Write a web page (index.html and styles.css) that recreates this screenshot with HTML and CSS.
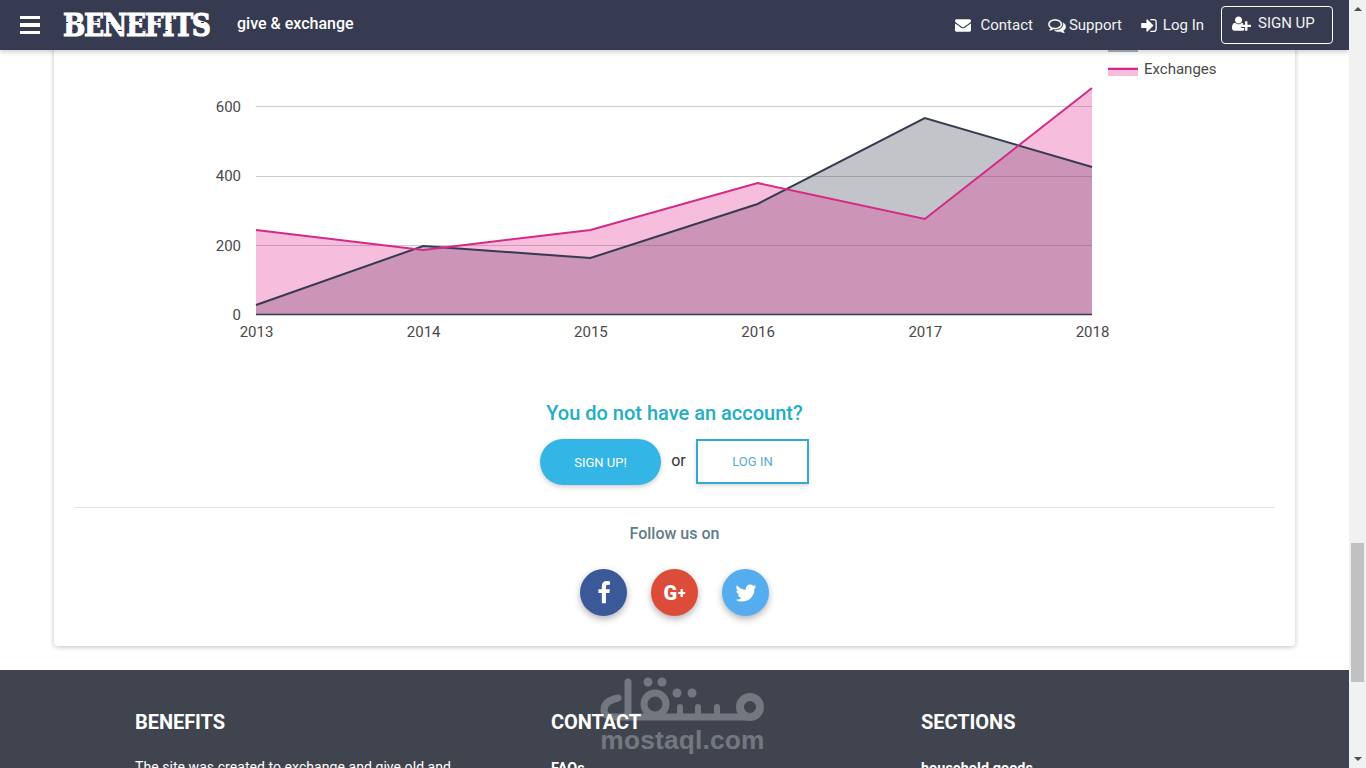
FILE: index.html
```html
<!DOCTYPE html>
<html lang="en">
<head>
<meta charset="utf-8">
<title>Benefits</title>
<link rel="stylesheet" href="styles.css">
</head>
<body>
<div class="window">
  <div class="page">
    <header class="navbar">
      <div class="nav-left">
        <div class="burger"><span></span><span></span><span></span></div>
        <div class="logo"><span class="logo-text">BENEFITS</span></div>
        <div class="tagline">give &amp; exchange</div>
      </div>
      <nav class="nav-right">
        <a class="nav-link link-contact">
          <svg class="ico ico-env" viewBox="0 256 1792 1408"><path fill="#fff" d="M1792 710v794q0 66-47 113t-113 47h-1472q-66 0-113-47t-47-113v-794q44 49 101 87 362 246 497 345 57 42 92.5 65.5t94.5 48 110 24.5h2q51 0 110-24.5t94.5-48 92.5-65.5q170-123 498-345 57-39 100-87zm0-294q0 79-49 151t-122 123q-376 261-468 325-10 7-42.5 30.5t-54 38-52 32.5-57.5 27-50 9h-2q-23 0-50-9t-57.5-27-52-32.5-54-38-42.5-30.5q-91-64-262-182.5t-205-142.5q-62-42-117-115.5t-55-136.5q0-78 41.5-130t118.5-52h1472q65 0 112.5 47t47.5 113z"/></svg>
          <span>Contact</span>
        </a>
        <a class="nav-link link-support">
          <svg class="ico ico-com" viewBox="0 128 1792 1536"><path fill="#fff" stroke="#fff" stroke-width="35" d="M704 384q-153 0-286 52t-211.5 141-78.5 191q0 82 53 158t149 132l97 56-35 84q34-20 62-39l44-31 53 10q78 14 153 14 153 0 286-52t211.5-141 78.5-191-78.5-191-211.5-141-286-52zm0-128q191 0 353.5 68.5t256.5 186.5 94 257-94 257-256.5 186.5-353.5 68.5q-86 0-176-16-124 88-278 128-36 9-86 16h-3q-11 0-20.5-8t-11.5-21q-1-3-1-6.5t.5-6.5 2-6l2.5-5 3.5-5.5 4-5 4.5-5 4-4.5q5-6 23-25t26-29.5 22.5-29 25-38.5 20.5-44q-124-72-195-177t-71-224q0-139 94-257t256.5-186.5 353.5-68.5zm822 1169q10 24 20.5 44t25 38.5 22.5 29 26 29.5 23 25q1 1 4 4.5t4.5 5 4 5 3.5 5.5l2.5 5 2 6 .5 6.5-1 6.5q-3 14-13 22t-22 7q-50-7-86-16-154-40-278-128-90 16-176 16-271 0-472-132 58 4 88 4 161 0 309-45t264-129q125-92 192-212t67-254q0-77-23-152 129 71 204 178t75 230q0 120-71 224.5t-195 176.5z"/></svg>
          <span>Support</span>
        </a>
        <a class="nav-link link-login">
          <svg class="ico ico-sign" viewBox="0 256 1536 1280"><path fill="#fff" d="M1184 896q0 26-19 45l-544 544q-19 19-45 19t-45-19-19-45v-288h-448q-26 0-45-19t-19-45v-384q0-26 19-45t45-19h448v-288q0-26 19-45t45-19 45 19l544 544q19 19 19 45zm352-352v704q0 119-84.5 203.5t-203.5 84.5h-320q-13 0-22.5-9.5t-9.5-22.5q0-4-1-20t-.5-26.5 3-23.5 10-19.5 20.5-6.5h320q66 0 113-47t47-113v-704q0-66-47-113t-113-47h-312l-11.5-1-11.5-3-8-5.5-7-9-2-13.5q0-4-1-20t-.5-26.5 3-23.5 10-19.5 20.5-6.5h320q119 0 203.5 84.5t84.5 203.5z"/></svg>
          <span>Log In</span>
        </a>
        <a class="nav-btn">
          <svg class="ico ico-user" viewBox="0 128 2048 1536"><path fill="#fff" d="M704 896q-159 0-271.5-112.5t-112.5-271.5 112.5-271.5 271.5-112.5 271.5 112.5 112.5 271.5-112.5 271.5-271.5 112.5zm960 128h352q13 0 22.5 9.5t9.5 22.5v192q0 13-9.5 22.5t-22.5 9.5h-352v352q0 13-9.5 22.5t-22.5 9.5h-192q-13 0-22.5-9.5t-9.5-22.5v-352h-352q-13 0-22.5-9.5t-9.5-22.5v-192q0-13 9.5-22.5t22.5-9.5h352v-352q0-13 9.5-22.5t22.5-9.5h192q13 0 22.5 9.5t9.5 22.5v352zm-736 224q0 52 38 90t90 38h256v238q-68 50-171 50h-874q-121 0-194-69t-73-190q0-53 3.5-103.5t14-109 26.5-108.5 43-97.5 62-81 85.5-53.5 111.5-20q19 0 39 17 79 61 154.5 91.5t164.5 30.5 164.5-30.5 154.5-91.5q20-17 39-17 78 0 133 29v359z"/></svg>
          <span>SIGN UP</span>
        </a>
      </nav>
    </header>

    <main class="card">
      <svg class="chart" viewBox="0 0 1241 370" role="img" aria-label="Line chart of exchanges per year">
        <g class="grid">
          <line x1="202" x2="1038" y1="106.5" y2="106.5"/>
          <line x1="202" x2="1038" y1="176.5" y2="176.5"/>
        </g>
        <polygon class="area-dark" points="202,305 369.2,246 536.4,258 703.6,204 870.8,118 1038,167 1038,315 202,315"/>
        <polygon class="area-pink" points="202,230 369.2,250 536.4,230 703.6,183 870.8,219 1038,88 1038,315 202,315"/>
        <line class="grid-over" x1="202" x2="1038" y1="245.5" y2="245.5"/>
        <polyline class="line-dark" points="202,305 369.2,246 536.4,258 703.6,204 870.8,118 1038,167"/>
        <polyline class="line-pink" points="202,230 369.2,250 536.4,230 703.6,183 870.8,219 1038,88"/>
        <line class="axis" x1="202" x2="1038" y1="314.500" y2="314.500"/>
        <g class="ylabels">
          <text x="187" y="111.500">600</text>
          <text x="187" y="181">400</text>
          <text x="187" y="250.500">200</text>
          <text x="187" y="320">0</text>
        </g>
        <g class="xlabels">
          <text x="202.500" y="337">2013</text>
          <text x="369.700" y="337">2014</text>
          <text x="536.900" y="337">2015</text>
          <text x="704.100" y="337">2016</text>
          <text x="871.300" y="337">2017</text>
          <text x="1038.500" y="337">2018</text>
        </g>
        <rect class="swatch-dark" x="1054" y="40" width="30" height="12"/>
        <rect class="swatch-pink" x="1054" y="67" width="30" height="9"/>
        <line class="line-pink" x1="1054" x2="1084" y1="69" y2="69"/>
        <text class="legend" x="1090" y="74">Exchanges</text>
      </svg>

      <h3 class="cta-title">You do not have an account?</h3>
      <div class="cta-row">
        <a class="btn-signup">SIGN UP!</a>
        <span class="cta-or">or</span>
        <a class="btn-login">LOG IN</a>
      </div>
      <hr class="divider">
      <div class="follow">Follow us on</div>
      <div class="socials">
        <a class="social fb"><svg viewBox="0 0 1792 1792"><path fill="#fff" d="M1343 12v264h-157q-86 0-116 36t-30 108v189h293l-39 296h-254v759h-306v-759h-255v-296h255v-218q0-186 104-288.500t277-102.500q147 0 228 12z"/></svg></a>
        <a class="social gp"><span class="gp-g">G</span><span class="gp-plus">+</span></a>
        <a class="social tw"><svg viewBox="0 0 1792 1792"><path fill="#fff" d="M1684 408q-67 98-162 167 1 14 1 42 0 130-38 259.500t-115.500 248.500-184.500 210.500-258 146-323 54.500q-271 0-496-145 35 4 78 4 225 0 401-138-105-2-188-64.500t-114-159.500q33 5 61 5 43 0 85-11-112-23-185.500-111.500t-73.500-205.500v-4q68 38 146 41-66-44-105-115t-39-154q0-88 44-163 121 149 294.500 238.500t371.500 99.500q-8-38-8-74 0-134 94.500-228.500t228.500-94.500q140 0 236 102 109-21 205-78-37 115-142 178 92-10 184-50z"/></svg></a>
      </div>
    </main>

    <footer class="footer">
      <section class="col col-a">
        <h4>BENEFITS</h4>
        <p>The site was created to exchange and give old and</p>
      </section>
      <section class="col col-b">
        <h4>CONTACT</h4>
        <p class="strong">FAQs</p>
      </section>
      <section class="col col-c">
        <h4>SECTIONS</h4>
        <p class="strong">household goods</p>
      </section>
      <div class="watermark">
        <svg class="wm-logo" viewBox="0 0 176 52">
          <g fill="none" stroke="#fff" stroke-linecap="round" stroke-linejoin="round">
            <path stroke-width="7" d="M32 6 V41"/>
            <path stroke-width="7" d="M22 22 C12 24 8 28 8 34 C8 38 11 41 16 41 H150"/>
            <circle stroke-width="7" cx="59" cy="28" r="11"/>
            <path stroke-width="6" d="M84 41 V31 M102 41 V31 M121 41 V31"/>
            <circle stroke-width="8" cx="154" cy="31" r="10"/>
          </g>
          <g fill="#fff">
            <circle cx="52" cy="6" r="4.500"/><circle cx="66" cy="6" r="4.500"/>
            <circle cx="81" cy="17" r="4.500"/><circle cx="96" cy="17" r="4.500"/>
          </g>
        </svg>
        <div class="wm-text">mostaql.com</div>
      </div>
    </footer>
  </div>
  <aside class="scrollbar">
    <span class="arrow up"></span>
    <div class="track"><div class="thumb"></div></div>
    <span class="arrow down"></span>
  </aside>
</div>
</body>
</html>
```

FILE: styles.css
```css
* { box-sizing: border-box; }
html, body { margin: 0; height: 100%; overflow: hidden; }
body { font-family: Roboto, "Liberation Sans", sans-serif; background: #fff; color: #444; }

.window { display: flex; width: 1366px; height: 768px; overflow: hidden; }
.page { position: relative; width: 1349px; height: 768px; overflow: hidden; background: #fff; }

.navbar {
  position: absolute; top: 0; left: 0; z-index: 5;
  width: 100%; height: 50px; padding: 0 16px 0 20px;
  display: flex; align-items: center; justify-content: space-between;
  background: #363b51; color: #fff;
  box-shadow: 0 2px 5px rgba(0,0,0,.2);
}
.nav-left { display: flex; align-items: center; }
.burger { width: 20px; display: flex; flex-direction: column; gap: 4px; margin-right: 23px; }
.burger span { display: block; height: 3.5px; background: #fff; }
.logo { position: relative; width: 174px; height: 30px; }
.logo-text {
  display: inline-block;
  font-family: "DejaVu Serif", "Liberation Serif", serif;
  font-weight: 700; font-size: 26.5px; line-height: 30px; letter-spacing: -1.3px;
  -webkit-text-stroke: .9px #fff;
  transform: scaleY(1.22); transform-origin: left center;
}
.logo::after {
  content: ""; position: absolute; left: 0; top: 12px; width: 150px; height: 9px;
  background:
    repeating-linear-gradient(90deg, #363b51 0 5px, transparent 5px 14px, #363b51 14px 17px, transparent 17px 31px) 0 0 / 100% 1px no-repeat,
    repeating-linear-gradient(90deg, transparent 0 9px, #363b51 9px 13px, transparent 13px 23px) 0 8px / 100% 1px no-repeat;
}
.tagline { font-size: 16px; font-weight: 500; line-height: 20px; margin-top: -3px; }

.nav-right { display: flex; align-items: center; font-size: 15px; color: #f2f2f2; }
.nav-link { display: flex; align-items: center; }
.ico { display: block; }
.ico-env { width: 16px; height: 13px; margin-right: 9px; }
.ico-com { width: 18px; height: 15px; margin-right: 3px; }
.ico-sign { width: 16px; height: 13px; margin-right: 6px; }
.ico-user { width: 19px; height: 15px; margin-right: 7px; }
.link-contact { margin-right: 15px; }
.link-support { margin-right: 19px; }
.link-login { margin-right: 17px; }
.nav-btn {
  display: flex; align-items: center; width: 112px; height: 38px;
  padding: 0 10px 4px; border: 1px solid #fff; border-radius: 4px;
}

.card {
  width: 1241px; height: 646px; margin-left: 54px;
  display: flex; flex-direction: column; align-items: center;
  background: #fff; border-radius: 0 0 4px 4px;
  box-shadow: 0 1px 5px rgba(0,0,0,.25);
}
.chart { display: block; width: 1241px; height: 370px; flex: none; }
.chart text { font-family: Roboto, sans-serif; font-size: 15px; fill: #4a4a4a; }
.grid line { stroke: #ccc; stroke-width: 1; }
.grid-over { stroke: rgba(120,90,110,.35); stroke-width: 1; }
.area-dark { fill: #363b51; fill-opacity: .3; }
.area-pink { fill: #e4268a; fill-opacity: .3; }
.line-dark { fill: none; stroke: #363b51; stroke-width: 2; }
.line-pink { fill: none; stroke: #d42a88; stroke-width: 2; }
.axis { stroke: #363b51; stroke-width: 1.5; }
.ylabels text { text-anchor: end; }
.xlabels text { text-anchor: middle; }
.swatch-dark { fill: #b4b5bb; }
.swatch-pink { fill: #f7bedc; }

.cta-title {
  margin: 31px 0 0; font-size: 20px; line-height: 24px; font-weight: 500; color: #23aec4;
}
.cta-row { display: flex; align-items: flex-start; margin-top: 14px; }
.btn-signup {
  width: 121px; height: 46px; border-radius: 23px;
  display: flex; align-items: center; justify-content: center;
  background: #33b5e5; color: #fff; font-size: 13px; font-weight: 400;
  box-shadow: 0 2px 5px rgba(0,0,0,.2);
}
.cta-or { width: 35px; line-height: 44px; text-align: center; font-size: 16px; color: #333; }
.btn-login {
  width: 113px; height: 45px;
  display: flex; align-items: center; justify-content: center;
  border: 2px solid #33a9d4; color: #5aa9cf; font-size: 13px; background: #fff;
  box-shadow: 0 2px 4px rgba(0,0,0,.15);
}
.divider { width: 1201px; height: 0; margin: 22px 0 0; border: 0; border-top: 1px solid #e4e4e4; }
.follow { margin-top: 16px; font-size: 16px; line-height: 20px; font-weight: 500; color: #607d8b; }
.socials { display: flex; gap: 24px; margin-top: 25px; }
.social {
  width: 47px; height: 47px; border-radius: 50%;
  display: flex; align-items: center; justify-content: center;
  box-shadow: 0 3px 7px rgba(0,0,0,.3);
}
.social svg { width: 24px; height: 24px; display: block; }
.fb { background: #3b5998; }
.gp { background: #dd4b39; color: #fff; font-weight: 900; }
.gp-g { font-size: 20px; line-height: 20px; }
.gp-plus { font-size: 14px; line-height: 20px; margin-left: 1px; }
.tw { background: #55acee; }

.footer {
  position: absolute; top: 670px; left: 0; width: 100%; height: 98px;
  background: #3f444f; color: #fff; overflow: hidden;
}
.col { position: absolute; top: 0; z-index: 1; }
.col-a { left: 135px; }
.col-b { left: 551px; }
.col-c { left: 921px; }
.col h4 { margin: 40px 0 0; font-size: 20px; line-height: 24px; font-weight: 700; letter-spacing: -.05px; }
.col p { margin: 23px 0 0; font-size: 14px; line-height: 20px; white-space: nowrap; letter-spacing: .06px; }
.col p.strong { margin-top: 25px; font-weight: 700; font-size: 14.4px; }

.watermark {
  position: absolute; left: 596px; top: 6px; width: 176px; opacity: .27;
  display: flex; flex-direction: column; align-items: center;
}
.wm-logo { display: block; width: 176px; height: 52px; }
.wm-text {
  font-family: "Liberation Sans", sans-serif; font-weight: 700; font-size: 26.3px;
  line-height: 26px; margin-top: -1px; margin-left: -3px; color: #fff; letter-spacing: .2px;
}

.scrollbar { width: 17px; height: 768px; background: #f1f1f1; display: flex; flex-direction: column; align-items: center; }
.arrow { display: block; width: 0; height: 0; flex: none; border-left: 4px solid transparent; border-right: 4px solid transparent; }
.arrow.up { margin: 7px 0 0; border-bottom: 4px solid #505050; }
.arrow.down { margin: 0 0 7px; border-top: 4px solid #505050; }
.track { flex: 1; width: 100%; padding-top: 532px; }
.thumb { width: 13px; height: 139px; margin: 0 auto; background: #c1c1c1; }
```
